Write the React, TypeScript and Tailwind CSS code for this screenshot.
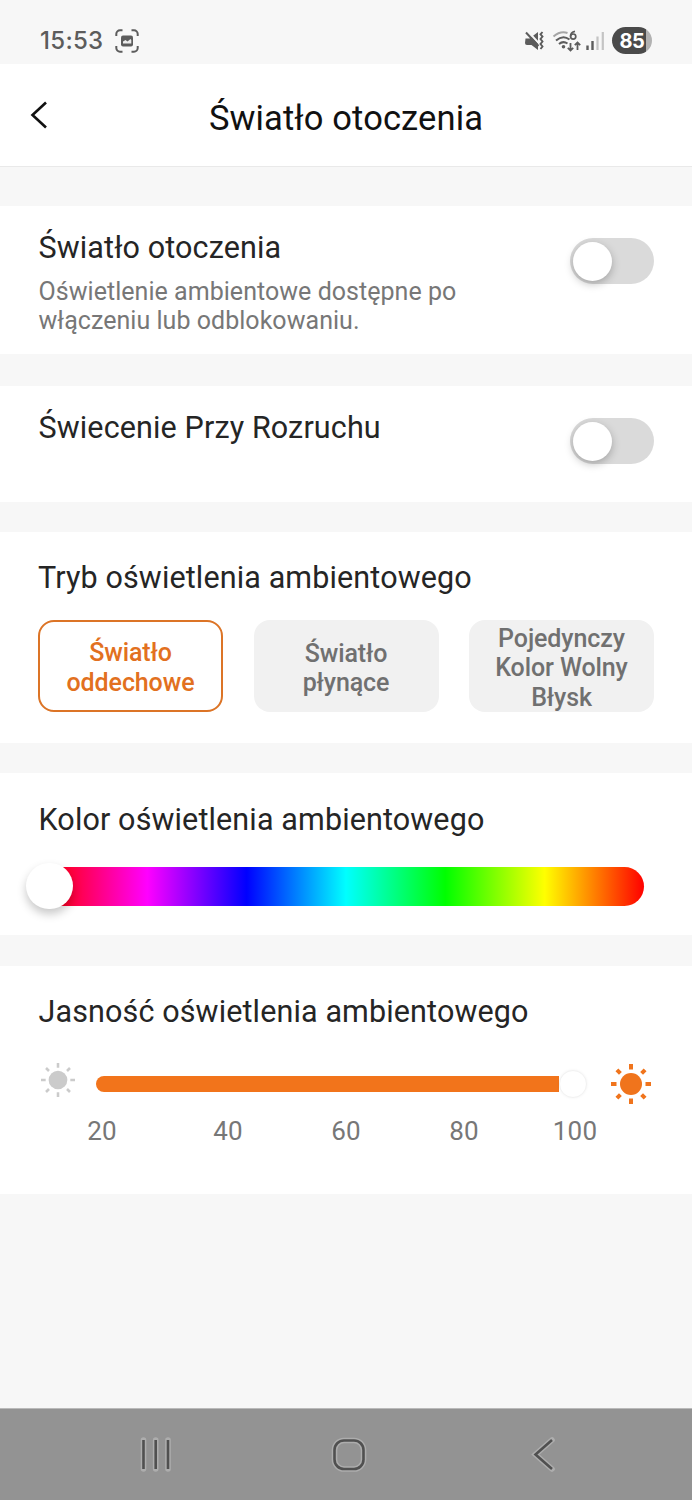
import { ReactNode, useState } from 'react';

function StatusBar() {
  return (
    <div className="flex h-16 items-center justify-between bg-[#f7f7f7] pr-10 pl-10 pt-[17px] text-[#5c5c5c]">
      <div className="flex items-center gap-[11px]">
        <span className="w-16 font-['Inter',sans-serif] text-[24px] leading-8 font-medium tracking-[0.3px]">15:53</span>
        <svg className="h-6 w-6" viewBox="0 0 24 24" fill="none" stroke="currentColor" strokeWidth="2">
          <path d="M1.300 7V5A3.700 3.700 0 0 1 5 1.300h2.500M16.500 1.300H19A3.700 3.700 0 0 1 22.700 5v2M22.700 17v2a3.700 3.700 0 0 1-3.700 3.700h-2.500M7.500 22.700H5A3.700 3.700 0 0 1 1.300 19v-2" />
          <rect x="6" y="6.500" width="12" height="11" rx="2" fill="currentColor" stroke="none" />
          <path d="M8 14.500v-2l2.500-1.500 2 1.500 3-2.500 .8 1v3.500z" fill="#ececec" stroke="none" />
        </svg>
      </div>
      <div className="flex items-center">
        <svg className="h-7 w-[88px]" viewBox="0 0 88 28" fill="none" stroke="currentColor">
          <path d="M1.500 11.500h4L14 5v18l-6.500-5H3a2 2 0 0 1-2-2z" fill="currentColor" stroke="none" />
          <path d="M3.500 4l12 13" stroke="#f7f7f7" strokeWidth="2" />
          <path d="M2 5.500L14.500 19" strokeWidth="2" />
          <path d="M18.500 5l-2 2.300 2 2.200-2 2.500 2 2.500-2 2.500 2 2.500-2 2.500" strokeWidth="1.900" />
          <path d="M29.500 9.500q7-6 14-3.500" stroke="#a5a5a5" strokeWidth="2" />
          <path d="M32 13.500q7-6 13.500-1M35 17q4-3.500 8.500-.5" strokeWidth="2" />
          <circle cx="39.500" cy="19.800" r="1.800" fill="currentColor" stroke="none" />
          <path d="M51 4.300q-4.500.8-4.500 5.200" strokeWidth="1.700" />
          <circle cx="49.200" cy="9.600" r="2.600" strokeWidth="1.700" />
          <path d="M46.500 16v7.500m-2.700-2.700l2.700 2.700 2.700-2.700M53.500 23v-7.500m-2.700 2.700l2.700-2.700 2.700 2.700" strokeWidth="1.800" />
          <path d="M63.500 18.500v4.500M68.500 14v9" strokeWidth="2.400" />
          <path d="M73.500 9.500V23M78.800 5V23" stroke="#c4c4c4" strokeWidth="2.200" />
        </svg>
        <div className="flex h-[27px] w-10 items-center justify-center rounded-full bg-[linear-gradient(90deg,#4a4a4a_85%,#b2b2b2_85%)] font-['Inter',sans-serif] text-[20px] leading-none font-bold tracking-[-0.5px] text-white">
          85
        </div>
      </div>
    </div>
  );
}

function Toggle({ label }: { label: string }) {
  const [on, setOn] = useState(false);
  return (
    <button
      role="switch"
      aria-checked={on}
      aria-label={label}
      onClick={() => setOn(!on)}
      className={`flex h-[46px] w-[84px] shrink-0 items-center rounded-full px-[3px] ${on ? 'justify-end bg-[#f2741b]' : 'bg-[#dadada]'}`}
    >
      <span className="h-[39px] w-[39px] rounded-full bg-white shadow-[0_3px_8px_rgba(0,0,0,0.25)]" />
    </button>
  );
}

function Heading({ children }: { children: ReactNode }) {
  return <h2 className="pt-px text-[30.500px] leading-9 tracking-[0.130px] whitespace-nowrap text-[#252525]">{children}</h2>;
}

function Sun({ className }: { className: string }) {
  return (
    <svg className={className} viewBox="0 0 40 40" fill="none" stroke="currentColor">
      <circle cx="20" cy="20" r="11" fill="currentColor" stroke="none" />
      <path d="M20 0v5.500M20 34.500V40M0 20h5.500M34.500 20H40M5.900 5.900l3.500 3.500M30.600 30.600l3.500 3.500M5.900 34.100l3.500-3.500M30.600 9.400l3.500-3.500" />
    </svg>
  );
}

const modes = [['Światło', 'oddechowe'], ['Światło', 'płynące'], ['Pojedynczy', 'Kolor Wolny', 'Błysk']];

export default function App() {
  const [mode, setMode] = useState(0);
  return (
    <div className="flex h-[1500px] w-[692px] flex-col overflow-hidden bg-[#f7f7f7] font-['Roboto',sans-serif]">
      <StatusBar />
      <header className="grid h-[103px] grid-cols-[80px_1fr_80px] items-center border-b border-[#e9e9e9] bg-white pb-px">
        <button aria-label="Wstecz" className="pl-[30px]">
          <svg className="h-[28px] w-[18px]" viewBox="0 0 18 28" fill="none" stroke="#111" strokeWidth="2.600">
            <path d="M16 1.500L2.500 14 16 26.500" />
          </svg>
        </button>
        <h1 className="pt-[6px] text-center text-[34.500px] leading-10 tracking-[0.120px] text-[#111]">Światło otoczenia</h1>
      </header>

      <section className="mt-[39px] flex h-[148px] justify-between bg-white pr-[38.500px] pl-[38.500px]">
        <div className="pt-[23px]">
          <Heading>Światło otoczenia</Heading>
          <p className="mt-[11px] text-[25px] leading-[29.400px] tracking-[0.040px] text-[#777]">
            Oświetlenie ambientowe dostępne po
            <br />
            włączeniu lub odblokowaniu.
          </p>
        </div>
        <div className="pt-8">
          <Toggle label="Światło otoczenia" />
        </div>
      </section>

      <section className="mt-8 flex h-[116px] justify-between bg-white pr-[38.500px] pl-[38.500px]">
        <div className="pt-[23px]">
          <Heading>Świecenie Przy Rozruchu</Heading>
        </div>
        <div className="pt-8">
          <Toggle label="Świecenie Przy Rozruchu" />
        </div>
      </section>

      <section className="mt-[30px] h-[211px] bg-white pt-[27px] pr-[38px] pl-[38px]">
        <Heading>Tryb oświetlenia ambientowego</Heading>
        <div className="mt-[24px] flex justify-between">
          {modes.map((lines, i) => (
            <button
              key={i}
              onClick={() => setMode(i)}
              className={`flex h-[92px] w-[185px] flex-col items-center justify-center rounded-2xl text-[25px] leading-[29.400px] font-medium tracking-[-0.1px] ${mode === i ? 'border-2 border-[#dc7426] bg-white pt-[3px] text-[#e27020]' : 'bg-[#f1f1f1] pt-[4px] text-[#707070]'}`}
            >
              {lines.map((line) => (
                <span key={line}>{line}</span>
              ))}
            </button>
          ))}
        </div>
      </section>

      <section className="mt-[30px] h-[162px] bg-white pt-[28px]">
        <div className="pl-[38.500px]">
          <Heading>Kolor oświetlenia ambientowego</Heading>
        </div>
        <div className="mt-[29px] mr-12 ml-12 flex h-[39px] items-center rounded-r-full bg-[linear-gradient(90deg,#f00,#f0f_16.667%,#00f_33.333%,#0ff_50%,#0f0_66.667%,#ff0_83.333%,#f00)]">
          <span className="mb-[2px] -ml-[22px] h-[46px] w-[47px] shrink-0 rounded-full bg-white shadow-[0_5px_10px_rgba(0,0,0,0.22)]" />
        </div>
      </section>

      <section className="mt-[31px] h-[228px] bg-white pt-[27px]">
        <div className="pl-[38.500px]">
          <Heading>Jasność oświetlenia ambientowego</Heading>
        </div>
        <div className="mt-[32px] flex h-11 items-center pl-[40.500px]">
          <Sun className="mb-[8px] h-[34px] w-[34px] stroke-3 text-[#cbcbcb]" />
          <div className="ml-[21.500px] h-4 w-[463px] rounded-l-full bg-[#f2741b]" />
          <span className="h-[28px] w-[28px] rounded-full border border-[#f2f2f2] bg-white shadow-[0_0_3px_rgba(0,0,0,0.05)]" />
          <Sun className="ml-[23.500px] h-10 w-10 stroke-4 text-[#f0741c]" />
        </div>
        <div className="mt-[8px] flex pl-[52px] text-[26px] leading-[34px] tracking-[0.2px] text-[#777]">
          <span className="w-[100px] text-center">20</span>
          <span className="ml-[26px] w-[100px] text-center">40</span>
          <span className="ml-[18px] w-[100px] text-center">60</span>
          <span className="ml-[18px] w-[100px] text-center">80</span>
          <span className="ml-[11px] w-[100px] text-center">100</span>
        </div>
      </section>

      <nav className="mt-auto h-[92px] border-t border-[#bababa] bg-[#939393]">
        <svg className="h-[91px] w-[692px]" viewBox="0 1 692 91" fill="none">
          {['#adadad', '#505050'].map((color, i) => (
            <g key={color} stroke={color} strokeWidth={i === 0 ? 5.6 : 2.6} strokeLinecap={i === 0 ? 'round' : 'butt'}>
              <path d="M143.500 32v29M155.700 32v29M168 32v29" />
              <rect x="334.500" y="32.500" width="29" height="28.500" rx="9.500" />
              <path d="M552 32L535.500 46.500 552 61" />
            </g>
          ))}
        </svg>
      </nav>
    </div>
  );
}
